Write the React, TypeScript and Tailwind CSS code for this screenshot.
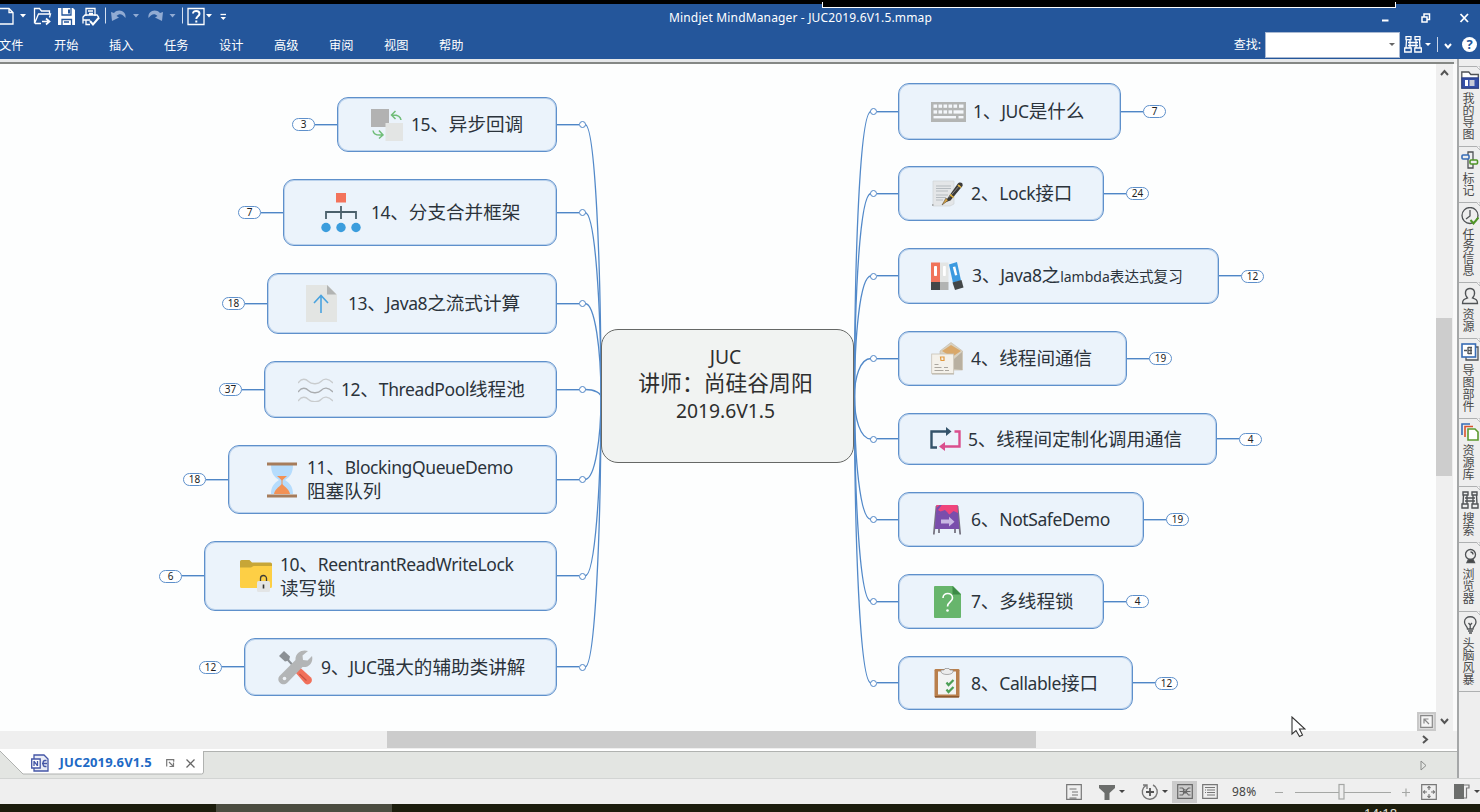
import React from "react";

type Topic = {
  side: "left" | "right";
  place: string;
  box: string;
  icon: React.ReactNode;
  label: React.ReactNode;
  labelClass: string;
  count: number;
};

const Keyboard = () => (
  <svg className="h-5 w-[35px] shrink-0" viewBox="0 0 35 20">
    <rect width="35" height="20" fill="#b3b5b4" />
    <g fill="#f4f7fb">
      {[2.5, 7.5, 12.5, 17.5, 22.5, 28].map((x) => (
        <rect key={x} x={x} y="2.5" width={x === 28 ? 4.5 : 3.6} height="3.3" />
      ))}
      {[2.5, 7.5, 12.5, 17.5].map((x) => (
        <rect key={x} x={x} y="8.3" width="3.6" height="3.3" />
      ))}
      <rect x="22.5" y="8.3" width="10" height="3.3" />
      <rect x="2.5" y="14" width="22.5" height="2.4" />
      <rect x="27.5" y="14" width="5" height="2.4" />
    </g>
  </svg>
);

const NotePen = () => (
  <svg className="h-[27px] w-[31px] shrink-0" viewBox="0 0 31 27">
    <path d="M1 1h21v23l-4 2H1z" fill="#e4e6e8" stroke="#d0d4d7" strokeWidth=".7" />
    <path d="M4 6h15M4 8.5h15M4 11h12M4 15h12M4 17.5h10M4 20h7" stroke="#b5bbc0" strokeWidth="1.2" />
    <path d="M25.500 4c2-2.500 6-1.500 5 2L18.500 20.500l-6 2z" fill="#3b3a38" />
    <path d="m28 5-11 12.500" stroke="#8b8985" strokeWidth="1" />
    <path d="m18 14.500 3.500 3M26 5l3 2.500" stroke="#e8b83a" strokeWidth="1.600" />
    <path d="m14 18-4 7 6-4.500z" fill="#d9a441" stroke="#4a4032" strokeWidth=".5" />
    <path d="M0 25h1.500" stroke="#777" />
  </svg>
);

const Binders = () => (
  <svg className="h-[29px] w-[33px] shrink-0" viewBox="0 0 33 29">
    <path d="M0 .5h9v20H0z" fill="#f0735a" />
    <path d="M0 20h9v8H0z" fill="#434748" />
    <path d="M9 .5h8.500v20H9z" fill="#e3e5e4" />
    <path d="M9 20h8.500v8H9z" fill="#b2b4b3" />
    <path d="m18 2.500 8-2.500 4 18.500-8 2.500z" fill="#3b9ae0" />
    <path d="m21.500 20.500 9-2.500 2 7.500-8.500 2.500z" fill="#434748" />
    <g fill="#fff">
      <rect x="3" y="4" width="3" height="10" rx=".8" />
      <rect x="12" y="4" width="2.800" height="10" rx=".8" />
      <path d="m21.800 5 2.500-.6 2 8.500-2.300.7z" />
    </g>
  </svg>
);

const Mail = () => (
  <svg className="h-[33px] w-8 shrink-0" viewBox="0 0 32 33">
    <path d="M9 9 20 .5 31.500 9v19H9z" fill="#d9d2c2" stroke="#c2b8a5" strokeWidth=".6" />
    <path d="M11 9 20 3l10 6-9 6z" fill="#d9a86a" />
    <path d="m31 10-8 7v10l8 1z" fill="#b9b0a0" />
    <rect x=".7" y="12" width="22" height="19.500" fill="#f4f1ea" stroke="#c9c2b4" strokeWidth=".8" />
    <path d="M9.500 15h3.500v3.500H10z" fill="none" stroke="#e2993e" strokeWidth="1.200" />
    <path d="M3.500 22.500h4M3.500 25.500h7M3.500 28.500h9M13 25.500h4M14 28.500h4" stroke="#aaa69f" strokeWidth="1" />
    <path d="M1 32h22" stroke="#b9b2a5" />
  </svg>
);

const Loop = () => (
  <svg className="h-6 w-[31px] shrink-0" viewBox="0 0 31 24">
    <path d="M7 20.500H1.500V4.500H17" fill="none" stroke="#34536a" strokeWidth="2.400" />
    <path d="m16 0 5.500 4.500L16 9z" fill="#34536a" />
    <path d="M24.500 4.500h5v15H14" fill="none" stroke="#da4f8d" strokeWidth="2.400" />
    <path d="M15 15v9l-6-4.500z" fill="#da4f8d" />
  </svg>
);

const Board = () => (
  <svg className="h-[30px] w-7 shrink-0" viewBox="0 0 28 30">
    <path d="M3.500 1 .8 29.500M24.500 1l2.700 28.500M6 24v4M22 24v4" stroke="#777481" strokeWidth="1.800" />
    <path d="M3.500 0h21l1.800 24H1.800z" fill="#7a4eac" />
    <path d="M3.500 0h21l.5 8-4.500-2-4 3.500-5-4L6 9.500 3 8z" fill="#f0457c" />
    <path d="m3.300 3 3.500-3h2L5 5l2.500 1.500L12 5l3 3-5 2-7-1z" fill="#7a4eac" />
    <path d="M8 14.500h8v-2.800l5.500 5-5.500 4.800v-3H8z" fill="#c9b8e4" />
  </svg>
);

const Question = () => (
  <svg className="h-8 w-[27px] shrink-0" viewBox="0 0 27 32">
    <path d="M1 0h18l8 8v23a1 1 0 0 1-1 1H1a1 1 0 0 1-1-1V1a1 1 0 0 1 1-1z" fill="#67b56c" />
    <path d="M18.500 0 27 8.500h-8.500z" fill="#3d8a47" />
    <path d="M9 12c0-6 9.500-6 9.500 0 0 4-5 4-5 8.500" fill="none" stroke="#fff" strokeWidth="1.600" />
    <circle cx="13.500" cy="24.500" r="1.300" fill="#fff" />
  </svg>
);

const Clipboard = () => (
  <svg className="h-[30px] w-[26px] shrink-0" viewBox="0 0 26 30">
    <rect x=".5" y="1" width="25" height="28.500" rx="1.200" fill="#b97f4c" />
    <path d="M1 28.800h24" stroke="#87552c" strokeWidth="1.400" />
    <rect x="4" y="3.500" width="18" height="23" fill="#f2f3f3" />
    <path d="M7 3.500c0 4 12 4 12 0V2h-3L15 .5h-4L10 2H7z" fill="#ececec" stroke="#8e8e8e" strokeWidth=".7" />
    <path d="m12.500 14.500 2 2.500 5-5M12.500 21.500l2 2.500 5-5" fill="none" stroke="#4c9f55" strokeWidth="2.200" />
  </svg>
);

const Swap = () => (
  <svg className="h-8 w-8 shrink-0" viewBox="0 0 32 32">
    <rect width="18" height="18" fill="#b2b2b2" />
    <rect x="14.500" y="14" width="17.500" height="18" fill="#e3e5e4" />
    <g fill="none" stroke="#70bd78" strokeWidth="1.500">
      <path d="M20.500 6c5-.3 9 1 9.500 5M24.500 2l-4 4 4 4M2 21.500c.5 4 4 5 9 4.500M8 21.500l4 4.500-4 3.500" />
    </g>
  </svg>
);

const OrgChart = () => (
  <svg className="h-10 w-10 shrink-0" viewBox="0 0 40 40">
    <rect x="15" y="0" width="10" height="9.500" fill="#f3735b" />
    <path d="M20 13v13M5 26v-7h30v7" fill="none" stroke="#4b606b" strokeWidth="1.800" />
    <g fill="#3b9ddd">
      <circle cx="5" cy="34.500" r="4.700" />
      <circle cx="20" cy="34.500" r="4.700" />
      <circle cx="35" cy="34.500" r="4.700" />
    </g>
  </svg>
);

const Upload = () => (
  <svg className="h-[37px] w-[31px] shrink-0" viewBox="0 0 31 37">
    <path d="M0 0h21.500L31 9.500V37H0z" fill="#e3e5e3" />
    <path d="M21 0l9.500 9.500H21z" fill="#b2b4b3" />
    <path d="M15 28V10.500M8 18l7-7.500 7 7.500" fill="none" stroke="#4aa3df" strokeWidth="1.600" />
  </svg>
);

const Waves = () => (
  <svg className="h-6 w-[35px] shrink-0" viewBox="0 0 35 24">
    <g fill="none" strokeWidth="1.300">
      <path d="M0 5c4-5.500 8-4 10.500-1.500S20 7 23 3.500s7-3.500 12 1.500" stroke="#c9ccce" />
      <path d="M0 14c4-5.500 8-4 10.500-1.500S20 16 23 12.500s7-3.500 12 1.500" stroke="#a9acaf" />
      <path d="M0 23c4-5.500 8-4 10.500-1.500S20 25 23 21.500s7-3.500 12 1.500" stroke="#c9ccce" />
    </g>
  </svg>
);

const Hourglass = () => (
  <svg className="h-9 w-[30px] shrink-0" viewBox="0 0 30 36">
    <path d="M4 3h22c0 8-3 12-8 15 5 3 8 7 8 14H4c0-7 3-11 8-14C7 15 4 11 4 3z" fill="#b5dcfd" />
    <path d="M10 14h10l-5 4.500z" fill="#f29155" />
    <path d="M7 32c1-5 4-6 8-10 4 4 7 5 8 10z" fill="#f29155" />
    <path d="M15 17v6" stroke="#f29155" />
    <path d="M0 2h30M0 34h30" stroke="#a67c5b" strokeWidth="3" />
  </svg>
);

const FolderLock = () => (
  <svg className="h-8 w-8 shrink-0" viewBox="0 0 32 32">
    <path d="M0 1.500A1.500 1.500 0 0 1 1.500 0h8L12 2.500h18.500A1.500 1.500 0 0 1 32 4v6H0z" fill="#c7a637" />
    <path d="M0 7.500h11L13.500 6H32v20.500a1.500 1.500 0 0 1-1.500 1.500h-29A1.500 1.500 0 0 1 0 26.500z" fill="#fdcf45" />
    <path d="M20.500 22v-3.500a3 3 0 0 1 6 0V22" fill="none" stroke="#3f3c35" strokeWidth="1.300" />
    <rect x="17" y="21" width="13" height="11" rx="1.500" fill="#e3e5e6" />
    <path d="M23.500 24.500v4" stroke="#333" strokeWidth="1.600" />
  </svg>
);

const Tools = () => (
  <svg className="h-[35px] w-[35px] shrink-0" viewBox="0 0 35 35">
    <path d="m1 6 5-5 6 5.500-1 4-4 1z" fill="#8b9095" />
    <path d="m10 10 10 11" stroke="#8b9095" strokeWidth="2" />
    <path d="m17 22 5-4.500 11 10c3 4-2 9-6 6z" fill="#f1705a" />
    <path d="m21.500 24 7 6.500" stroke="#c9503f" strokeWidth="1.200" />
    <path d="M30 1c-5-2-13 1-12.500 9L1.500 26c-4 5 3 11 7.500 7l15.500-16c7 1 11-5 9.500-11l-4.500 4.500-4.500-.5-.5-4.500z" fill="#b3b5b6" />
    <circle cx="6.500" cy="28.500" r="1.800" fill="#eef2f6" />
  </svg>
);

const En = ({ children }: { children: React.ReactNode }) => (
  <span className="text-[17.500px] tracking-[-0.400px]">{children}</span>
);

const topics: Topic[] = [
  { side: "left", place: "right-[850px] top-[33px]", box: "h-[55px] w-[220px] pl-[33px]", icon: <Swap />, label: <><En>15</En>、异步回调</>, labelClass: "ml-2", count: 3 },
  { side: "left", place: "right-[850px] top-[115px]", box: "h-[67px] w-[274px] pl-[37px]", icon: <OrgChart />, label: <><En>14</En>、分支合并框架</>, labelClass: "ml-2.5", count: 7 },
  { side: "left", place: "right-[850px] top-[209px]", box: "h-[61px] w-[290px] pl-[38px]", icon: <Upload />, label: <><En>13</En>、<En>Java8</En>之流式计算</>, labelClass: "ml-[11px]", count: 18 },
  { side: "left", place: "right-[850px] top-[297px]", box: "h-[57px] w-[293px] pl-[33px]", icon: <Waves />, label: <><En>12</En>、<En>ThreadPool</En>线程池</>, labelClass: "ml-2", count: 37 },
  { side: "left", place: "right-[850px] top-[381px]", box: "h-[69px] w-[329px] pl-[38px]", icon: <Hourglass />, label: <><En>11</En>、<En>BlockingQueueDemo</En><br />阻塞队列</>, labelClass: "ml-2.5", count: 18 },
  { side: "left", place: "right-[850px] top-[477px]", box: "h-[70px] w-[353px] pl-[35px]", icon: <FolderLock />, label: <><En>10</En>、<En>ReentrantReadWriteLock</En><br />读写锁</>, labelClass: "ml-2", count: 6 },
  { side: "left", place: "right-[850px] top-[574px]", box: "h-[58px] w-[313px] pl-[33px]", icon: <Tools />, label: <><En>9</En>、<En>JUC</En>强大的辅助类讲解</>, labelClass: "ml-2", count: 12 },
  { side: "right", place: "left-[870px] top-[19px]", box: "h-[57px] w-[223px] pl-8", icon: <Keyboard />, label: <><En>1</En>、<En>JUC</En>是什么</>, labelClass: "ml-[7px]", count: 7 },
  { side: "right", place: "left-[870px] top-[102px]", box: "h-[55px] w-[206px] pl-[33px]", icon: <NotePen />, label: <><En>2</En>、<En>Lock</En>接口</>, labelClass: "ml-2", count: 24 },
  { side: "right", place: "left-[870px] top-[184px]", box: "h-[56px] w-[321px] pl-8", icon: <Binders />, label: <><En>3</En>、<En>Java8</En>之<span className="text-[14px]">lambda</span><span className="text-[14.600px]">表达式复习</span></>, labelClass: "ml-2", count: 12 },
  { side: "right", place: "left-[870px] top-[267px]", box: "h-[55px] w-[229px] pl-8", icon: <Mail />, label: <><En>4</En>、线程间通信</>, labelClass: "ml-2", count: 19 },
  { side: "right", place: "left-[870px] top-[349px]", box: "h-[52px] w-[319px] pl-[31px]", icon: <Loop />, label: <><En>5</En>、线程间定制化调用通信</>, labelClass: "ml-[7px]", count: 4 },
  { side: "right", place: "left-[870px] top-[428px]", box: "h-[55px] w-[246px] pl-[34px]", icon: <Board />, label: <><En>6</En>、<En>NotSafeDemo</En></>, labelClass: "ml-2.5", count: 19 },
  { side: "right", place: "left-[870px] top-[510px]", box: "h-[55px] w-[206px] pl-[35px]", icon: <Question />, label: <><En>7</En>、多线程锁</>, labelClass: "ml-2.5", count: 4 },
  { side: "right", place: "left-[870px] top-[592px]", box: "h-[54px] w-[235px] pl-[35px]", icon: <Clipboard />, label: <><En>8</En>、<En>Callable</En>接口</>, labelClass: "ml-[11px]", count: 12 },
];

function Branch({ t }: { t: Topic }) {
  const dir = t.side === "left" ? "flex-row-reverse" : "flex-row";
  return (
    <div className={`absolute flex items-center ${dir} ${t.place}`}>
      <span className="size-[7px] shrink-0 rounded-full border border-[#4f86c6] bg-white" />
      <span className={`h-[2px] shrink-0 border-t border-[#4f86c6] bg-[#b4cde9] ${t.side === "left" ? "w-[22px]" : "w-[21px]"}`} />
      <div className={`flex shrink-0 items-center rounded-[11px] border border-[#5e90cb] bg-[#ebf3fb] shadow-[inset_0_0_0_1px_#b9d1ec] ${t.box}`}>
        {t.icon}
        <span className={`mb-px whitespace-nowrap text-[18.600px] leading-6 text-[#2b333b] ${t.labelClass}`}>{t.label}</span>
      </div>
      <span className="h-[2px] w-[22px] shrink-0 border-t border-[#4f86c6] bg-[#b4cde9]" />
      <span className="flex h-[13px] w-[23px] shrink-0 items-center justify-center rounded-full border border-[#5e90cb] bg-white pb-px text-[10px] leading-none text-[#222]">
        {t.count}
      </span>
    </div>
  );
}

const leftEnds = [124.5, 212.5, 303.5, 389.5, 479.5, 576, 667];
const rightEnds = [111.5, 193.5, 276, 358.5, 439, 519.5, 601.5, 683];

function Curves() {
  return (
    <svg className="absolute inset-0 h-[667px] w-[1436px]" viewBox="0 64 1436 667" fill="none" stroke="#5289c9" strokeWidth="1.300">
      {leftEnds.map((y) => (
        <path key={y} d={`M601 397C601 ${397 + (y - 397) * 0.5} 595 ${y} 585 ${y}`} />
      ))}
      {rightEnds.map((y) => (
        <path key={y} d={`M854.500 397C854.500 ${397 + (y - 397) * 0.5} 860 ${y} 871 ${y}`} />
      ))}
    </svg>
  );
}

const Caret = ({ className = "" }: { className?: string }) => (
  <svg className={`h-[3px] w-1.5 shrink-0 ${className}`} viewBox="0 0 6 3">
    <path d="M0 0h6L3 3z" fill="currentColor" />
  </svg>
);

const Binoculars = ({ className = "" }: { className?: string }) => (
  <svg className={`h-[17px] w-[18px] shrink-0 ${className}`} viewBox="0 0 18 17" fill="none" stroke="currentColor" strokeWidth="1.300">
    <path d="M2 .7h5v3H2zM11 .7h5v3h-5zM2.500 3.700 2 12M6 3.700V12M15.500 3.700 16 12M12 3.700V12M.7 12h6.500v4H.7zM10.800 12h6.500v4h-6.500zM4 6.500h10M4 9.500h10" />
  </svg>
);

function Header() {
  return (
    <header className="h-[55px] shrink-0 bg-[#24569b] text-white">
      <div className="flex h-6 items-center">
        <svg className="h-6 w-[240px] shrink-0" viewBox="0 4 240 24" fill="none" stroke="#fff" strokeWidth="1.300">
          <path d="M-2 8.500H9l4 4V24H-2M9 8.500v4h4" />
          <path d="M20 14h6l-3 3.500zM220.500 17h5.500l-2.700 3z" fill="#fff" stroke="none" />
          <path d="M220.500 14.500h5.500" />
          <path d="M34.500 23.500V8.500h5l2 2.500h8v3M34.500 23.500l4-9.500h12l-1 3.500M35 23.500h6" />
          <path d="M42 21.500h6M46 18.500l3.500 3-3.500 3" strokeWidth="1.700" />
          <path d="M58 8h15l2 2v15H58z" fill="#fff" stroke="none" />
          <path d="M62 8v7h9V8M62 25v-5.500h9.500V25M64 22h5" stroke="#24569b" />
          <rect x="68" y="9.500" width="2" height="4" fill="#24569b" stroke="none" />
          <path d="M86 16V8.500h9V16M83 23.500v-6.500l2-2h12l1.500 2v2M83 20h7M86 20v4.500h4M88 11h5M89 13.500h4" />
          <path d="m90 21 3 3.500 6-7" strokeWidth="2" />
          <path d="M105.500 7.500v16M182.500 7.500v16" strokeWidth="1" stroke="#d5e0f0" />
          <g fill="#91abd3" stroke="none">
            <path d="m111 12 1 9 7-3.500-2.500-1.500c3-3 6-2 9 2 1-7-7-10-11.500-5z" />
            <path d="m163 12-1 9-7-3.500 2.500-1.500c-3-3-6-2-9 2-1-7 7-10 11.500-5z" />
            <path d="M133 14h6l-3 3.500zM169.500 14h6l-3 3.500z" />
          </g>
          <path d="M188 8.500h16v16h-16z" />
          <path d="M193 13.500c0-3.500 6.500-3.500 6.500.3 0 2.500-3.200 2.300-3.200 5.200M196.300 20.500v2" strokeWidth="2" />
          <path d="M206 14h6l-3 3.500z" fill="#fff" stroke="none" />
        </svg>
        <h1 className="ml-[429px] mt-1 w-[280px] whitespace-nowrap text-xs tracking-[0.150px]">Mindjet MindManager - JUC2019.6V1.5.mmap</h1>
        <svg className="ml-auto h-6 w-[110px] shrink-0" viewBox="1370 4 110 24" fill="none" stroke="#fff" strokeWidth="1.500">
          <path d="M1382 20.500h6.500" strokeWidth="2" />
          <path d="M1422 17h5v5h-5zM1424 17v-3h5.500v5.500H1427" />
          <path d="m1460.500 14 7.500 8M1468 14l-7.500 8" strokeWidth="1.800" />
        </svg>
      </div>
      <div className="flex h-[31px] items-center">
        <nav className="ml-px flex items-center text-[12.200px]">
          {["文件", "开始", "插入", "任务", "设计", "高级", "审阅", "视图", "帮助"].map((m) => (
            <a key={m} className="-ml-[2px] mr-[32px] w-[25px] whitespace-nowrap pt-[6px]">{m}</a>
          ))}
        </nav>
        <div className="ml-auto flex items-center pt-[2px]">
          <span className="mr-[4px] whitespace-nowrap text-xs">查找:</span>
          <div className="flex h-[26px] w-[135px] items-center justify-end border border-[#a9b9d2] bg-white pr-1 text-[#666]">
            <Caret />
          </div>
          <Binoculars className="ml-1" />
          <Caret className="ml-[3px]" />
          <span className="ml-[6px] h-[15px] w-px bg-[#c6d3e8]" />
          <svg className="ml-1.5 mt-0.5 h-1.5 w-2 shrink-0" viewBox="0 0 8 6" fill="none" stroke="#fff" strokeWidth="2">
            <path d="m1 1 3 3.500L7 1" />
          </svg>
          <span className="ml-[10px] mr-[3px] flex size-[15px] items-center justify-center rounded-full bg-white text-[13px] font-bold leading-none text-[#24569b]">?</span>
        </div>
      </div>
    </header>
  );
}

const s = { fill: "none", stroke: "#505356", strokeWidth: 1.3 };
const sideTabs = [
  {
    name: "我的导图", h: "h-20",
    icon: (<g {...s}><path d="M.8 17V1h7l2 2.500h7.500V17z" fill="#fff" /><path d="M1 7h16.500v10H1z" fill="#344fa8" stroke="#2f4590" /><path d="M4 9h3v6H4z" fill="#fff" stroke="none" /><path d="M8.500 9h5v6h-5z" fill="#c7cbd8" stroke="none" /></g>),
  },
  {
    name: "标记", h: "h-14",
    icon: (<g {...s}><path d="M7 1h5v16H7z" /><rect x="1" y="4" width="7" height="4" rx="1" fill="#eee" stroke="#376cb5" strokeWidth="1.600" /><rect x="9" y="9" width="7.500" height="4" rx="1" fill="#eee" stroke="#4f9526" strokeWidth="1.600" /></g>),
  },
  {
    name: "任务信息", h: "h-20",
    icon: (<g {...s}><circle cx="9" cy="8.500" r="8" /><path d="M9 3v6l-4 3" /><path d="m9.500 13 3 3.500 5-6" stroke="#4f9526" strokeWidth="2" /></g>),
  },
  {
    name: "资源", h: "h-14",
    icon: (<path {...s} d="M1.500 16.500c0-4 2-4.500 5-5.500C3 7 4 1.500 9 1.500S15 7 11.500 11c3 1 5 1.500 5 5.500z" />),
  },
  {
    name: "导图部件", h: "h-20",
    icon: (<g {...s}><path d="M14 4h3v13H5v-3" /><rect x="1" y="1" width="13.500" height="13" fill="#fff" stroke="#376cb5" strokeWidth="1.600" /><path d="M3 7.500h3M7 4.500h4M7 7.500h4M7 10.500h4M7 4v7M10 4v7" /></g>),
  },
  {
    name: "资源库", h: "h-[68px]",
    icon: (<g {...s}><path d="M1 12V1h8" stroke="#376cb5" strokeWidth="1.600" /><path d="M4 14V3.500h8" stroke="#d9532c" strokeWidth="1.600" /><path d="M7 6h7l3 3v8H7z" fill="#fff" stroke="#5d9a2f" strokeWidth="1.600" /></g>),
  },
  {
    name: "搜索", h: "h-14",
    icon: (<path {...s} strokeWidth="1.400" d="M2 1h5v3H2zM11 1h5v3h-5zM2.500 4 2 13M6 4v9M15.500 4l.5 9M12 4v9M1 13h6v4H1zM11 13h6v4h-6zM4 7h10M4 10h10" />),
  },
  {
    name: "浏览器", h: "h-[69px]",
    icon: (<g {...s}><circle cx="9.500" cy="7.500" r="5" /><path d="M9.500 5c1.500 0 2.500 1 2.500 2.500" /><path d="M6 15.500h7.500l-1.500-3H7.500z" fill="#444" /></g>),
  },
  {
    name: "头脑风暴", h: "h-20",
    icon: (<g {...s}><path d="M6.500 13c0-3-3-3.500-3-7 0-7 11.500-7 11.500 0 0 3.500-3 4-3 7zM7 15h5M8 17h3M9.200 13V8M7.500 7l1.700 2L11 7" /></g>),
  },
];

function Sidebar() {
  return (
    <aside className="flex w-[23px] shrink-0 flex-col overflow-hidden border-l-2 border-[#a5a7a8] bg-[#eeeeee] pt-[7px]">
      {sideTabs.map((t) => (
        <div key={t.name} className={`relative flex shrink-0 flex-col items-center border-t border-[#aeb0b1] ${t.h}`}>
          <svg className="absolute -top-px right-0 size-[5px]" viewBox="0 0 5 5">
            <path d="M1 0h4v4z" fill="#fafafa" stroke="#aeb0b1" strokeWidth=".8" />
          </svg>
          <div className="flex h-[25px] shrink-0 items-center">
            <svg className="size-[18px]" viewBox="0 0 18 18">{t.icon}</svg>
          </div>
          <span className="mr-1 whitespace-nowrap text-xs leading-[17px] text-[#4a4a4a] [writing-mode:vertical-rl]">{t.name}</span>
        </div>
      ))}
      <div className="border-t border-[#aeb0b1]" />
    </aside>
  );
}

function StatusBar() {
  return (
    <footer className="flex h-[26px] shrink-0 items-center border-t border-[#d2d4d3] bg-[#efefef] pl-[1066px] text-[#444]">
      <svg className="size-4 shrink-0" viewBox="0 0 16 16" fill="none" stroke="#777" strokeWidth="1.200">
        <path d="M.7.7h14.600v14.600H.7zM3.500 5h7M6 8h6M6 11h6M3.500 14h7" />
      </svg>
      <svg className="ml-[17px] h-4 w-4 shrink-0" viewBox="0 0 16 16">
        <path d="M0 1h16v3l-5.500 5v7h-5V9L0 4z" fill="#6c6e6c" />
      </svg>
      <Caret className="ml-1" />
      <svg className="ml-[16px] size-[18px] shrink-0" viewBox="0 0 18 18" fill="none" stroke="#777" strokeWidth="1.400">
        <path d="M12 2a7.500 7.500 0 1 1-7 .3M2 2h4v4" />
        <path d="M9 5v8M5 9h8" stroke="#555" strokeWidth="1.800" />
      </svg>
      <Caret className="ml-[3px]" />
      <span className="ml-1 flex h-[22px] w-[25px] shrink-0 items-center justify-center bg-[#cbcbcb]">
        <svg className="h-[15px] w-4" viewBox="0 0 16 15" fill="none" stroke="#686868" strokeWidth="1.200">
          <path d="M.7.7h14.600v13.600H.7zM2.500 4h3l2 2h2l2-2h2M2.500 11h3l2-2.500h2l2 2.500h2M2.500 7.500h11M6.500 6h3v3h-3z" />
        </svg>
      </span>
      <svg className="ml-[5px] h-[15px] w-4 shrink-0" viewBox="0 0 16 15" fill="none" stroke="#777" strokeWidth="1.200">
        <path d="M.7.7h14.600v13.600H.7zM3 3.500h10M5 6h8M5 8.500h8M5 11h8M3 6h1M3 8.500h1" />
      </svg>
      <span className="ml-[14px] w-[26px] shrink-0 whitespace-nowrap text-xs tracking-[0.200px]">98%</span>
      <svg className="ml-[16px] h-[18px] w-[140px] shrink-0" viewBox="1274 782 140 18" fill="none" stroke="#a5a7a5" strokeWidth="1.200">
        <path d="M1275 791.500h8M1295 791.500h96M1402 791.500h8M1406 787.500v8" />
        <rect x="1339" y="783.500" width="5" height="14.500" fill="#eee" />
      </svg>
      <svg className="ml-[7px] size-4 shrink-0" viewBox="0 0 16 16" fill="none" stroke="#777" strokeWidth="1.200">
        <path d="M.7.7h14.600v14.600H.7z" />
        <path d="M8 2.500v11M2.500 8h11" strokeDasharray="3.500 4" />
        <path d="M6.500 4 8 2.500 9.500 4M6.500 12 8 13.500 9.500 12M4 6.500 2.500 8 4 9.500M12 6.500 13.500 8 12 9.500" />
      </svg>
      <svg className="ml-[17px] h-[15px] w-4 shrink-0" viewBox="0 0 16 15">
        <path d="M0 0h10v15H0z" fill="#6b6d6b" />
        <path d="M10 1h5v3h-2.500v10H10" fill="none" stroke="#777" strokeWidth="1.200" />
      </svg>
      <Caret className="ml-1" />
    </footer>
  );
}

function MapCanvas() {
  return (
    <div className="relative h-[667px] w-[1436px] shrink-0 overflow-hidden bg-[#fdfefe]">
      <Curves />
      <div className="absolute left-[601px] top-[265px] h-[134px] w-[253px] rounded-[17px] border-[1.500px] border-[#666866] bg-[#f1f3f2] pr-1 pt-[13px] text-center text-[21.800px] leading-[27px] text-[#2e2e2e]">
        <p className="text-[19.300px]">JUC</p>
        <p className="-mt-px">讲师：尚硅谷周阳</p>
        <p className="mt-px text-[19.300px]">2019.6V1.5</p>
      </div>
      {topics.map((t, i) => (
        <Branch key={i} t={t} />
      ))}
      <div className="absolute bottom-0 right-0 flex h-[19px] w-[19px] items-center justify-center border-2 border-[#c9c9c9] bg-[#ddd]">
        <svg className="size-[13px]" viewBox="0 0 13 13" fill="none" stroke="#888" strokeWidth="1.200">
          <path d="M.7.7h11.600v11.600H.7z" fill="#f5f5f5" />
          <path d="M4 8.500V4h4.500M4 4l5 5" />
        </svg>
      </div>
    </div>
  );
}

export default function App() {
  return (
    <div className="flex h-[812px] w-[1480px] flex-col overflow-hidden bg-[#efefef] font-['Noto_Sans','Noto_Sans_CJK_SC',sans-serif]">
      <div className="relative h-1 shrink-0 bg-black">
        <div className="absolute left-[822px] top-0.5 h-[6px] w-[574px] border border-t-0 border-white bg-black" />
      </div>
      <Header />
      <div className="flex h-[719px] shrink-0">
        <main className="relative flex w-[1457px] shrink-0 flex-col">
          <div className="mr-[3px] h-[5px] shrink-0 border-b-2 border-[#858885] bg-[#e6e8ea]" />
          <div className="flex h-[667px] shrink-0">
            <MapCanvas />
            <div className="flex w-[17px] flex-col items-center bg-[#efefef] text-[#555]">
              <svg className="mt-[5px] h-2 w-[9px] shrink-0" viewBox="0 0 9 8" fill="none" stroke="currentColor" strokeWidth="2">
                <path d="m1 6 3.500-4L8 6" />
              </svg>
              <div className="mt-[241px] h-[158px] w-4 shrink-0 self-start bg-[#cdcdcd]" />
              <svg className="mb-[6px] mt-auto h-2 w-[9px] shrink-0" viewBox="0 0 9 8" fill="none" stroke="currentColor" strokeWidth="2">
                <path d="m1 2 3.500 4L8 2" />
              </svg>
            </div>
            <div className="flex-1 bg-[#fafafa]" />
          </div>
          <div className="flex h-[20px] shrink-0 border-b-2 border-white bg-[#efefef] pl-[387px]">
            <div className="h-[17px] w-[649px] bg-[#cccccc]" />
            <svg className="ml-[385px] mt-[4px] h-[9px] w-2" viewBox="0 0 8 9" fill="none" stroke="#555" strokeWidth="2">
              <path d="m2 1 4 3.500L2 8" />
            </svg>
          </div>
          <div className="relative flex h-[27px] shrink-0 items-start border-t border-[#b0b2b0] bg-[#e3e5e2]">
            <svg className="absolute -top-px left-0 h-6 w-[204px]" viewBox="0 0 204 24">
              <path d="M0 0h203.500v21q0 2-2 2H23z" fill="#fff" />
              <path d="M0 0l23 23h178.500q2 0 2-2V0" fill="none" stroke="#b0b2b0" />
            </svg>
            <div className="relative flex h-[22px] w-[204px] items-center pl-[31px]">
              <svg className="h-[18px] w-[18px] shrink-0" viewBox="0 0 18 18" fill="none" stroke="#4456a6" strokeWidth="1.300">
                <path d="M3 5V1h10l4 4v12H3v-3" fill="#e9ecf6" />
                <path d="M.7 5h8.500v9H.7z" fill="#fff" />
                <path d="M3 7v5M6.500 7v5M3 7l3.500 5M11 9.500h5M15.500 6.500H14q-2 0-2 3t2 3h1.500" />
              </svg>
              <span className="ml-[10.500px] w-[94px] whitespace-nowrap text-[13px] font-bold tracking-[0.150px] text-[#2069c5]">JUC2019.6V1.5</span>
              <svg className="ml-3 h-[9px] w-[9px] shrink-0" viewBox="0 0 9 9" fill="none" stroke="#777" strokeWidth="1.200">
                <path d="M.7 7.500V.7h7v2M3 3l4 4M7.500 3.500v4h-4" />
              </svg>
              <svg className="ml-[11px] h-[9px] w-[9px] shrink-0" viewBox="0 0 9 9" stroke="#666" strokeWidth="1.300">
                <path d="m.5.5 8 8M8.500.5l-8 8" />
              </svg>
            </div>
            <svg className="ml-auto mr-[30px] mt-2 h-[11px] w-[7px]" viewBox="0 0 7 11" fill="none" stroke="#8a8c8a">
              <path d="M1 1v9l5-4.500z" />
            </svg>
          </div>
          <svg className="absolute left-[1291px] top-[657px] h-[22px] w-[15px]" viewBox="0 0 15 22">
            <path d="M1 1v17l4-3.500 3.500 6 3-1.500-3-6H14z" fill="#fff" stroke="#333" strokeWidth="1.100" />
          </svg>
        </main>
        <Sidebar />
      </div>
      <StatusBar />
      <div className="flex h-2 shrink-0 overflow-hidden bg-[#1c1d0d] pl-[216px]">
        <div className="h-2 w-[176px] shrink-0 bg-[#4b4c40]" />
        <span className="ml-[972px] mt-[3px] shrink-0 text-[13px] leading-3 text-[#e0e0da]">14:18</span>
      </div>
    </div>
  );
}
